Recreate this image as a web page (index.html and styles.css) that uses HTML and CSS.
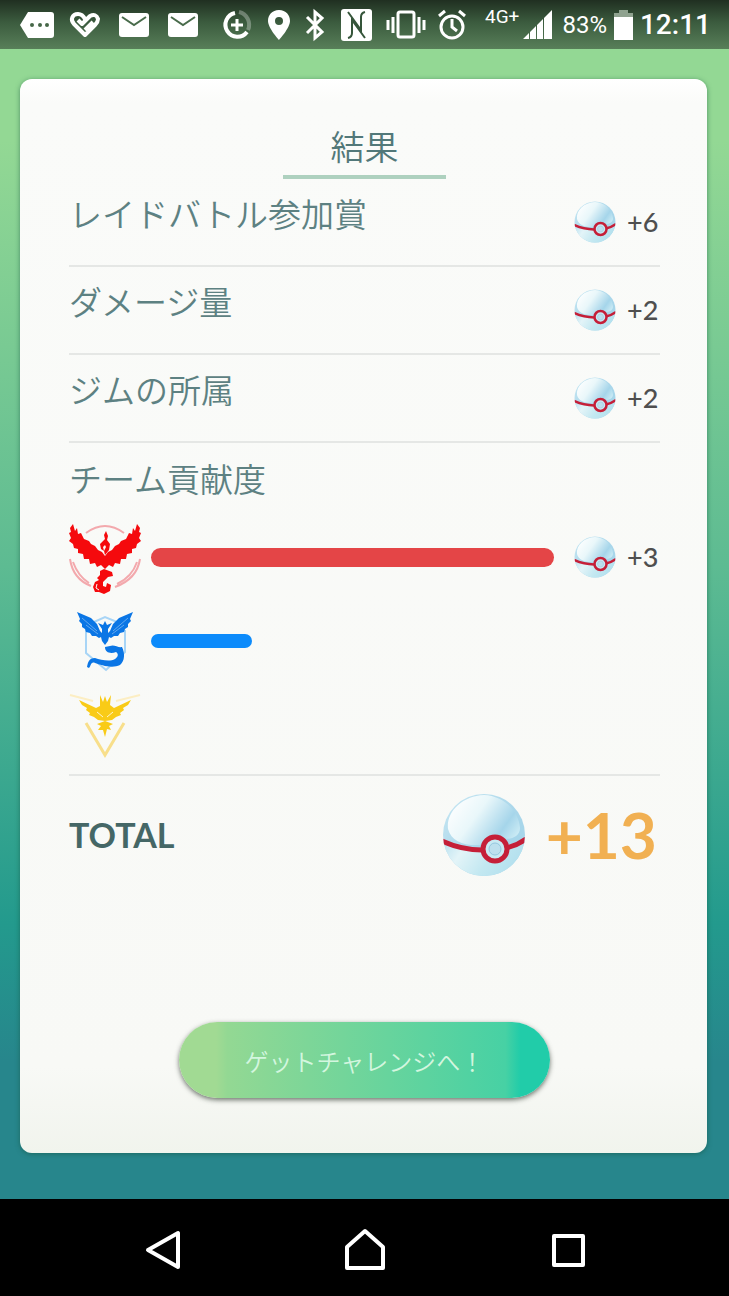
FILE: index.html
```html
<!DOCTYPE html>
<html lang="ja">
<head>
<meta charset="utf-8">
<meta name="viewport" content="width=device-width, initial-scale=1">
<title>結果</title>
<link rel="stylesheet" href="styles.css">
</head>
<body>
<svg class="defs" width="0" height="0" aria-hidden="true">
  <defs>
    <linearGradient id="ball-base" x1="0" y1="0" x2="1" y2="1">
      <stop offset="0" stop-color="#c9e8f3"/>
      <stop offset=".55" stop-color="#a9d6ea"/>
      <stop offset="1" stop-color="#a3d6ea"/>
    </linearGradient>
    <linearGradient id="ball-shine" x1="0" y1=".2" x2="1" y2=".7">
      <stop offset="0" stop-color="#fff"/>
      <stop offset=".4" stop-color="#e9f7fa"/>
      <stop offset=".8" stop-color="#a5d5ea"/>
      <stop offset="1" stop-color="#c9eaf4"/>
    </linearGradient>
    <linearGradient id="ball-low" x1="0" y1="0" x2="1" y2=".3">
      <stop offset="0" stop-color="#b5dfef"/>
      <stop offset=".3" stop-color="#e3f4f8"/>
      <stop offset=".65" stop-color="#c3e8f1"/>
      <stop offset="1" stop-color="#b3e0ee"/>
    </linearGradient>
    <clipPath id="ball-clip"><circle cx="42" cy="42" r="41"/></clipPath>
    <symbol id="ball" viewBox="0 0 84 84">
      <g clip-path="url(#ball-clip)">
        <rect width="84" height="84" fill="url(#ball-base)"/>
        <path d="M0 49Q20 57 42 57Q64 56 84 47V84H0Z" fill="url(#ball-low)"/>
        <path d="M6 36C4 19 20 3 42 2C63 3 77 19 78 35C78 43 70 46 64 46C54 38 43 44 38 52C22 53 9 48 6 36Z" fill="url(#ball-shine)"/>
        <path d="M0 48Q20 57 40 57M64 55Q74 53 84 46" fill="none" stroke="#c51f38" stroke-width="5"/>
      </g>
      <circle cx="53" cy="56" r="12" fill="#c9eaf3" stroke="#c51f38" stroke-width="5"/>
      <circle cx="53" cy="56" r="6" fill="#bde0ee" stroke="#94c7df" stroke-width="1"/>
    </symbol>
  </defs>
</svg>
<div class="screen">
  <header class="status">
    <svg width="34" height="26" viewBox="0 0 34 26"><path d="M8 0H31Q34 0 34 3V23Q34 26 31 26H8L0 13Z" fill="#fff"/><g fill="#466748"><circle cx="12" cy="13" r="2"/><circle cx="20" cy="13" r="2"/><circle cx="27" cy="13" r="2"/></g></svg>
    <svg class="heart" width="30" height="26" viewBox="0 0 30 26"><path d="M8 8L12 12L20 4Q26 1 28 7Q28 10 25 13L15 23L4 12C0 8 2 2 8 2C12 2 14 5 15 7M15 18L23 10" fill="none" stroke="#fff" stroke-width="4" stroke-linejoin="round"/></svg>
    <svg class="mail" width="30" height="24" viewBox="0 0 30 24"><rect width="30" height="24" rx="3" fill="#fff"/><path d="M3 4L15 12L27 4" fill="none" stroke="#496b4b" stroke-width="2"/></svg>
    <svg class="mail" width="30" height="24" viewBox="0 0 30 24"><rect width="30" height="24" rx="3" fill="#fff"/><path d="M3 4L15 12L27 4" fill="none" stroke="#496b4b" stroke-width="2"/></svg>
    <svg class="data" width="30" height="30" viewBox="0 0 30 30" fill="none" stroke="#fff"><path d="M17 2A13 13 0 0 1 26 20" stroke-width="4" opacity=".3"/><path d="M13 3A12 12 0 1 0 25 22" stroke-width="4"/><path d="M15 9V21M9 15H21" stroke-width="3"/></svg>
    <svg class="pin" width="22" height="30" viewBox="0 0 22 30"><path fill="#fff" fill-rule="evenodd" d="M11 0C4 0 0 5 0 11C0 18 11 30 11 30S22 18 22 11C22 5 18 0 11 0ZM11 7A4 4 0 1 1 11 15A4 4 0 0 1 11 7Z"/></svg>
    <svg class="bt" width="20" height="30" viewBox="0 0 20 30"><path d="M2 7L17 22L10 28V2L17 8L2 23" fill="none" stroke="#fff" stroke-width="3"/></svg>
    <svg class="nfc" width="31" height="32" viewBox="0 0 31 32"><rect width="31" height="32" rx="3" fill="#fff"/><path d="M7 3L20 21V8Q20 4 24 3M7 29Q11 28 11 24V11L24 29" fill="none" stroke="#35553a" stroke-width="2"/></svg>
    <svg class="vibe" width="38" height="28" viewBox="0 0 38 28"><rect x="11" y="1" width="16" height="25" rx="2" fill="none" stroke="#fff" stroke-width="3"/><path d="M1 9V19M6 6V22M32 6V22M37 9V19" stroke="#fff" stroke-width="3"/></svg>
    <svg class="alarm" width="28" height="30" viewBox="0 0 28 30" fill="none" stroke="#fff" stroke-width="3"><circle cx="14" cy="17" r="11"/><path d="M14 9V17L19 21M1 6L7 1M27 6L21 1"/></svg>
    <span class="net">4G+</span>
    <svg class="signal" width="29" height="29" viewBox="0 0 29 29"><path d="M0 29L6 23V29ZM7 22L13 16V29H7ZM14 15L20 9V29H14ZM21 8L29 0V29H21Z" fill="#fff"/></svg>
    <span class="pct">83%</span>
    <svg class="batt" width="19" height="30" viewBox="0 0 19 30"><path d="M5 0H14V3H19V7H0V3H5Z" fill="#8fa28f"/><path d="M0 7H19V30H0Z" fill="#fff"/></svg>
    <time class="clock">12:11</time>
  </header>

  <main class="stage">
    <section class="card">
      <h1 class="title">結果</h1>
      <div class="row"><h2 class="label">レイドバトル参加賞</h2><p class="prize"><svg class="ball"><use href="#ball"/></svg>+6</p></div>
      <div class="row"><h2 class="label">ダメージ量</h2><p class="prize"><svg class="ball"><use href="#ball"/></svg>+2</p></div>
      <div class="row"><h2 class="label">ジムの所属</h2><p class="prize"><svg class="ball"><use href="#ball"/></svg>+2</p></div>
      <div class="teams">
        <h2 class="label team-label">チーム貢献度</h2>
        <div class="team">
          <svg width="72" height="72" viewBox="0 0 72 72">
            <g fill="none" stroke="#f3a9ad" stroke-width="2"><path d="M17 12Q36 -2 55 12M1 38Q4 58 22 65M4 41Q9 55 20 62M71 38Q68 58 46 66M68 41Q63 56 48 63"/></g>
            <g fill="#f50a0d"><path d="M4 3L6 10L8 7L9 13L12 12L15 18L20 20L22 23L26 25L29 29L33 31L36 35L39 31L43 29L46 25L50 23L52 20L57 18L60 12L63 13L64 7L66 10L68 3L71 7L70 11L72 12L70 17L72 20L68 23L67 27L63 28L63 32L58 33L57 38L52 38L51 43L46 42L44 46L40 44L36 48L32 44L28 46L26 42L21 43L20 38L15 38L14 33L9 32L9 28L5 27L4 23L0 20L2 17L0 12L2 11L1 7Z"/><path d="M37 10L39 15L38 19L41 23L40 29L36 34L35 30L37 26L36 24L34 26L35 30L32 28L31 23L36 18L35 14Z"/><path d="M31 50L35 48L43 51L44 55L39 56L34 61L34 65L37 66L38 62L42 64L41 70L35 73L30 71L26 71L24 66L26 61L30 59L28 57L31 54Z"/></g>
            <path d="M28 63L27 67L30 69" fill="none" stroke="#fafbf9" stroke-width="1"/>
          </svg>
          <div class="track"><div class="bar valor"></div></div>
          <p class="prize"><svg class="ball"><use href="#ball"/></svg>+3</p>
        </div>
        <div class="team">
          <svg width="72" height="72" viewBox="0 0 72 72">
            <path d="M17 25V48L37 65L56 47V25M25 17L36 12L48 17" fill="none" stroke="#a8d5f6" stroke-width="2"/>
            <g fill="#0b76e5"><path d="M8 7L22 13L28 19L31 26L34 29H38L41 26L44 19L50 13L64 7L61 14L62 16L59 19L59 22L56 24L55 27L51 28L49 31L45 31L42 33L40 32L39 36L36 40L33 36L32 32L30 33L27 31L23 31L21 28L17 27L16 24L13 22L13 19L10 16L11 14Z"/><path d="M36 16L38 20L43 18L39 24V31H33V24L29 18L34 20Z"/><path d="M36 42L41 41C45 39 49 43 53 42C56 48 56 56 51 60C43 64 32 60 26 58C22 56 22 61 20 63L18 62C19 57 20 53 26 53C32 55 41 57 46 54C49 52 50 49 47 47C42 49 36 48 36 42Z"/></g>
            <path d="M13 13L28 26M17 20L29 29M59 13L44 26M55 20L43 29" stroke="#63a9ef" stroke-width="1"/>
          </svg>
          <div class="track"><div class="bar mystic"></div></div>
        </div>
        <div class="team">
          <svg width="72" height="72" viewBox="0 4 72 72">
            <path d="M17 38L36 70L55 38" fill="none" stroke="#f8df8b" stroke-width="3"/><path d="M1 10L24 16M71 10L47 16" stroke="#fceec3" stroke-width="2"/>
            <g fill="#f9cb17"><path d="M31 10L34 17L36 11L38 17L42 10L41 20L45 23L62 15L59 20L54 23L55 25L51 28L52 30L47 32L43 35L36 36L29 35L25 32L20 30L21 28L17 25L18 23L13 20L10 15L27 23L31 21Z"/><path d="M28 39L36 36L44 39L40 41L42 45L38 44L36 52L34 45L29 45L32 41Z"/></g>
            <path d="M28 27L34 32M44 27L38 32" fill="none" stroke="#fff5d0" stroke-width="1"/>
          </svg>
        </div>
      </div>
      <div class="total"><h2 class="total-label">TOTAL</h2><p class="sum"><svg class="ball big"><use href="#ball"/></svg>+13</p></div>
      <button class="go" type="button">ゲットチャレンジへ！</button>
    </section>
  </main>

  <nav class="nav">
    <button type="button" aria-label="戻る"><svg width="40" height="42" viewBox="0 0 40 42"><path d="M36 4V38L6 21Z"/></svg></button>
    <button type="button" aria-label="ホーム"><svg width="40" height="42" viewBox="0 0 40 42"><path d="M2 39V18L20 2L38 18V39Z"/></svg></button>
    <button type="button" aria-label="最近使ったアプリ"><svg width="40" height="42" viewBox="0 0 40 42"><path d="M6 7H35V36H6Z"/></svg></button>
  </nav>
</div>
</body>
</html>
```
FILE: styles.css
```css
* { box-sizing: border-box; }
body, h1, h2, p { margin: 0; }
body { font-family: Lato, "Noto Sans CJK JP", sans-serif; color: #4f4f4f; }
button { border: 0; padding: 0; font: inherit; cursor: pointer; }
svg { display: block; flex: none; overflow: visible; }
.defs { position: absolute; }
.screen { min-height: 100vh; display: flex; flex-direction: column; }

.status { height: 49px; padding: 0 18px 0 20px; display: flex; align-items: center; color: #fff; font-family: Roboto, sans-serif; background: linear-gradient(#202f21, #3b5b3e 45%, #587f59); }
.heart { margin-left: 16px; }
.mail { margin-left: 19px; }
.data { margin-left: 24px; }
.pin { margin-left: 16px; }
.bt { margin-left: 15px; }
.nfc { margin-left: 16px; }
.vibe { margin-left: 15px; }
.alarm { margin-left: 13px; }
.net { margin-left: 19px; padding-bottom: 16px; font-size: 19px; line-height: 20px; }
.signal { margin-left: 4px; }
.pct { margin-left: 10px; font-size: 24px; }
.batt { margin-left: 7px; }
.clock { margin-left: auto; font-size: 28px; font-weight: 500; }

.stage { flex: 1; display: flex; padding: 30px 22px 46px 20px; background: linear-gradient(#93d894, #93d894 8%, #5dbb92 45%, #239a8d 76%, #27868c 88%, #27868c); }
.card { flex: 1; display: flex; flex-direction: column; padding: 48px 47px 55px 49px; border-radius: 12px; background: linear-gradient(#fff, #fafbf9 24px, #f8f9f6 92%, #f1f4ed); box-shadow: 0 1px 5px rgba(20, 80, 60, .55); }
.title { align-self: center; width: 163px; height: 52px; border-bottom: 4px solid #aed1bf; text-align: center; font-size: 34px; line-height: 40px; font-weight: 350; color: #527879; }
.row { display: flex; justify-content: space-between; align-items: center; height: 88px; border-bottom: 2px solid #e5e7e5; }
.label { padding-bottom: 16px; font-size: 33px; line-height: 40px; font-weight: 350; color: #5d8182; }
.prize { display: flex; align-items: center; gap: 11px; width: 86px; font-size: 27px; line-height: 32px; font-weight: 500; }
.ball { width: 42px; height: 42px; }
.big { width: 84px; height: 84px; }
.teams { padding-bottom: 7px; border-bottom: 2px solid #e5e7e5; }
.team-label { padding: 16px 0; }
.team { display: grid; grid-template-columns: 72px 1fr 86px; align-items: center; height: 84px; }
.track { margin: 0 20px 0 10px; }
.bar { border-radius: 10px; }
.valor { height: 19px; background: #e44547; }
.mystic { width: 25%; height: 14px; background: #0c8bfb; }
.total { display: flex; justify-content: space-between; align-items: center; height: 118px; }
.total-label { font-size: 34px; line-height: 40px; font-weight: 700; color: #456766; }
.sum { display: flex; align-items: center; gap: 20px; padding-right: 3px; font-size: 64px; line-height: 72px; font-weight: 700; color: #f1b052; }
.go { align-self: center; width: 371px; max-width: 100%; height: 76px; margin-top: auto; border-radius: 38px; font-size: 24px; font-weight: 350; color: #d3f6df; background: linear-gradient(90deg, #a1da93 10%, #93d893 13%, #47d1a4 88%, #21cca9 92%); box-shadow: 0 2px 5px rgba(50, 60, 50, .7); }

.nav { height: 97px; padding: 5px 60px 0; display: flex; justify-content: space-around; background: #000; }
.nav button { width: 96px; display: flex; align-items: center; justify-content: center; background: none; }
.nav path { fill: none; stroke: #fff; stroke-width: 4; stroke-linejoin: round; }
```
